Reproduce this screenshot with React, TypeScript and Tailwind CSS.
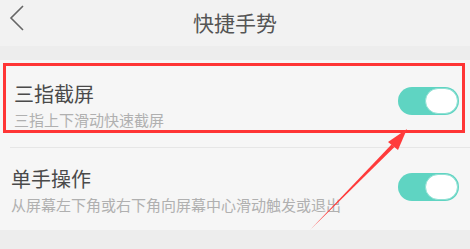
import React from 'react';

const cjk = { fontFamily: '"Noto Sans CJK SC", "Noto Sans", sans-serif' };

const Toggle = () => (
  <div className="w-[61px] h-[28px] rounded-full bg-[#5fd4c2] p-px flex items-center">
    <div className="ml-auto w-[33px] h-[26px] rounded-full bg-white border border-[#8fe0d3]" />
  </div>
);

const Arrow = () => (
  <svg className="absolute inset-0 pointer-events-none" width="470" height="249" viewBox="0 0 470 249">
    <polygon points="310,230 391.5,144.5 394.5,147" fill="#ff3b3b" />
    <polygon points="407,129 398,150 388,142" fill="#ff3b3b" />
  </svg>
);

export default function App() {
  return (
    <div className="relative w-[470px] h-[249px] overflow-hidden bg-[#ededed]" style={cjk}>
      {/* 顶栏 */}
      <div className="h-[46px] bg-[#f2f2f2] flex items-center relative">
        <svg className="absolute left-[9px] top-[5px]" width="16" height="26" viewBox="0 0 16 26">
          <path d="M14 1 L2 13 L14 25" fill="none" stroke="#666" strokeWidth="1.6" />
        </svg>
        <div className="w-full text-center text-[21px] leading-[28px] text-[#555] -mt-[2px]">快捷手势</div>
      </div>

      <div className="h-[14px]" />

      {/* 列表 */}
      <div className="bg-[#f6f6f6]">
        <div className="h-[87px] pt-[3px] pl-[3px] pr-[5px]">
          <div className="h-[70px] border-[3px] border-[#ff3535] flex justify-between pl-[8px] pr-[3px]">
            <div className="pt-[16px]">
              <div className="text-[20px] leading-[24px] text-[#4a4a4a]">三指截屏</div>
              <div className="text-[15px] leading-[18px] text-[#b0b0b0] mt-[5px]">三指上下滑动快速截屏</div>
            </div>
            <div className="pt-[21px]">
              <Toggle />
            </div>
          </div>
        </div>
        <div className="h-px bg-[#e6e6e6] ml-[10px]" />
        <div className="h-[82px] flex justify-between pl-[11px] pr-[11px]">
          <div className="pt-[19px]">
            <div className="text-[20px] leading-[24px] text-[#4a4a4a]">单手操作</div>
            <div className="text-[15px] leading-[18px] text-[#b0b0b0] mt-[5px]">从屏幕左下角或右下角向屏幕中心滑动触发或退出</div>
          </div>
          <div className="pt-[25px]">
            <Toggle />
          </div>
        </div>
      </div>

      <Arrow />
    </div>
  );
}
